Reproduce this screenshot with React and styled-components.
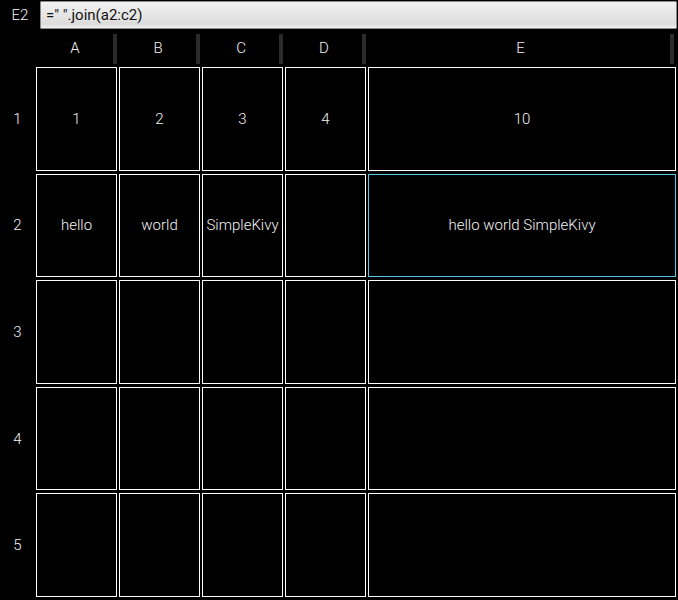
import React from "react";
import styled, { createGlobalStyle } from "styled-components";

const Global = createGlobalStyle`
  html, body { margin: 0; padding: 0; background: #000; }
  body { font-family: Roboto, "Liberation Sans", sans-serif; }
`;

const Page = styled.div`
  width: 678px;
  height: 600px;
  background: #000;
  display: flex;
  flex-direction: column;
  overflow: hidden;
`;

const TopBar = styled.div`
  display: flex;
  align-items: stretch;
  height: 28px;
  padding-top: 1px;
  padding-right: 1px;
`;

const CellName = styled.div`
  width: 40px;
  display: flex;
  align-items: center;
  justify-content: center;
  color: #f2f2f2;
  font-size: 15px;
  font-weight: 300;
`;

const FormulaInput = styled.div`
  flex: 1;
  box-sizing: border-box;
  border: 1px solid #8a8a8a;
  background: linear-gradient(#f2f2f2, #dcdcdc 85%, #f0f0f0);
  color: #111;
  font-size: 15px;
  display: flex;
  align-items: center;
  padding-left: 5px;
  border-radius: 1px;
`;

const HeaderRow = styled.div`
  display: grid;
  grid-template-columns: 36px 81px 81px 81px 81px 308px;
  column-gap: 2px;
  height: 38px;
  margin-left: -2px;
  align-items: stretch;
`;

const HeaderCell = styled.div`
  position: relative;
  display: flex;
  align-items: center;
  justify-content: center;
  padding-right: 3px;
  color: #f2f2f2;
  font-size: 15px;
  font-weight: 300;
`;

const Divider = styled.span`
  position: absolute;
  right: ${(p) => p.$right}px;
  top: 5px;
  width: 4px;
  height: 30px;
  background: #2b2b2b;
`;

const Body = styled.div`
  display: flex;
  flex: 1;
  padding-bottom: 3px;
`;

const RowLabels = styled.div`
  width: 36px;
  display: grid;
  grid-template-rows: repeat(5, 1fr);
  row-gap: 3px;
`;

const RowLabel = styled.div`
  display: flex;
  align-items: center;
  justify-content: center;
  color: #f2f2f2;
  font-size: 15px;
  font-weight: 300;
  padding-right: 1px;
`;

const Grid = styled.div`
  display: grid;
  grid-template-columns: 81px 81px 81px 81px 308px;
  grid-template-rows: repeat(5, 1fr);
  column-gap: 2px;
  row-gap: 3px;
`;

const Cell = styled.div`
  box-sizing: border-box;
  border: 1px solid ${(p) => (p.$active ? "#5cc6e6" : "#ffffff")};
  display: flex;
  align-items: center;
  justify-content: center;
  color: #f2f2f2;
  font-size: 15px;
  font-weight: 300;
  white-space: nowrap;
  overflow: hidden;
`;

const cols = ["A", "B", "C", "D", "E"];
const data = [
  ["1", "2", "3", "4", "10"],
  ["hello", "world", "SimpleKivy", "", "hello world SimpleKivy"],
  ["", "", "", "", ""],
  ["", "", "", "", ""],
  ["", "", "", "", ""],
];

export default function App() {
  return (
    <Page>
      <Global />
      <TopBar>
        <CellName>E2</CellName>
        <FormulaInput>=" ".join(a2:c2)</FormulaInput>
      </TopBar>
      <HeaderRow>
        <HeaderCell />
        {cols.map((c, i) => (
          <HeaderCell key={c}>
            {c}
            <Divider $right={i === 4 ? 2 : 0} />
          </HeaderCell>
        ))}
      </HeaderRow>
      <Body>
        <RowLabels>
          {data.map((_, r) => (
            <RowLabel key={r}>{r + 1}</RowLabel>
          ))}
        </RowLabels>
        <Grid>
          {data.map((row, r) =>
            row.map((v, c) => (
              <Cell key={`${r}-${c}`} $active={r === 1 && c === 4}>
                {v}
              </Cell>
            ))
          )}
        </Grid>
      </Body>
    </Page>
  );
}
